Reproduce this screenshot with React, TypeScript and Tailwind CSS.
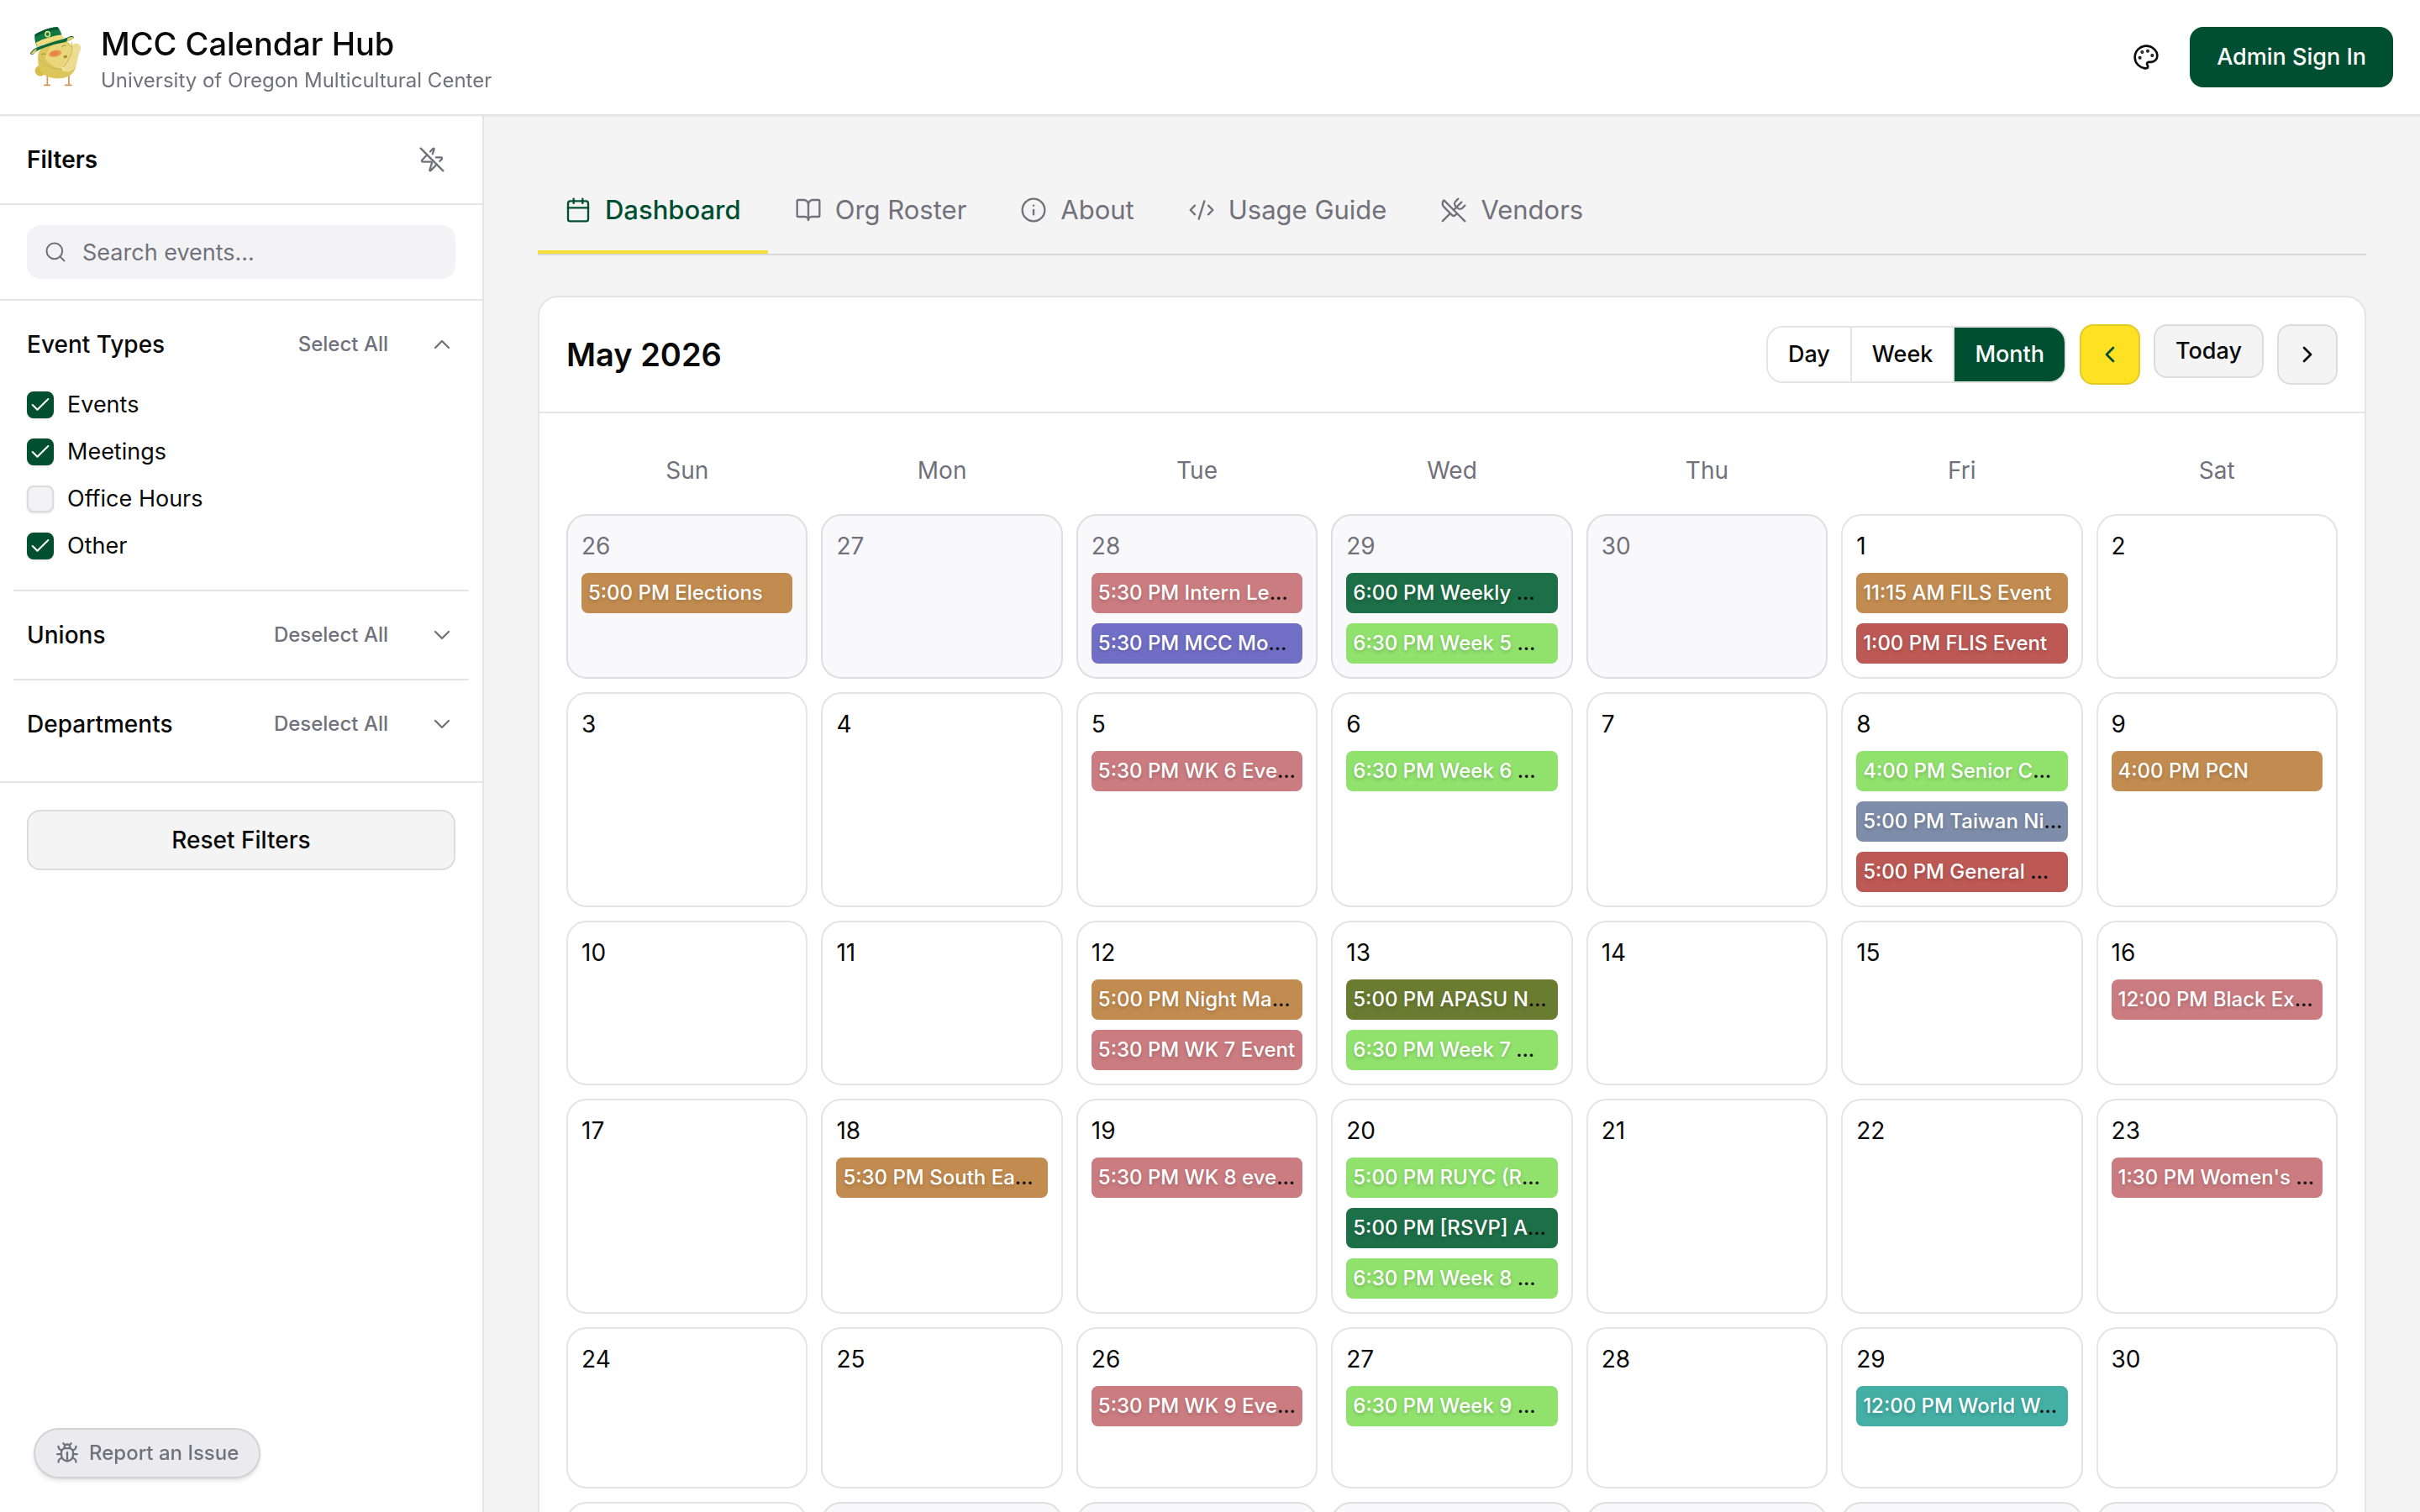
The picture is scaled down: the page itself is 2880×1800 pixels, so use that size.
import { useState } from "react";
import {
  Bug,
  Calendar,
  Check,
  ChevronDown,
  ChevronLeft,
  ChevronRight,
  ChevronUp,
  CodeXml,
  Info,
  Search,
  UtensilsCrossed,
  ZapOff,
} from "lucide-react";

interface CalendarEvent {
  time: string;
  title: string;
  color: string;
  cut?: boolean;
}

interface CalendarDay {
  day: number;
  outside?: boolean;
  events?: CalendarEvent[];
}

const BROWN = "bg-[#c28c50]";
const ROSE = "bg-[#cb7c80]";
const INDIGO = "bg-[#716fc5]";
const FOREST = "bg-[#1d6f48]";
const LIME = "bg-[#90e26d]";
const RED = "bg-[#bd5955]";
const SLATE = "bg-[#7e8da9]";
const OLIVE = "bg-[#6a7c30]";
const TEAL = "bg-[#44afa5]";

const weekdays = ["Sun", "Mon", "Tue", "Wed", "Thu", "Fri", "Sat"];

const days: CalendarDay[] = [
  { day: 26, outside: true, events: [{ time: "5:00 PM", title: "Elections", color: BROWN }] },
  { day: 27, outside: true },
  {
    day: 28,
    outside: true,
    events: [
      { time: "5:30 PM", title: "Intern Le", color: ROSE, cut: true },
      { time: "5:30 PM", title: "MCC Mo", color: INDIGO, cut: true },
    ],
  },
  {
    day: 29,
    outside: true,
    events: [
      { time: "6:00 PM", title: "Weekly ", color: FOREST, cut: true },
      { time: "6:30 PM", title: "Week 5 ", color: LIME, cut: true },
    ],
  },
  { day: 30, outside: true },
  {
    day: 1,
    events: [
      { time: "11:15 AM", title: "FILS Event", color: BROWN },
      { time: "1:00 PM", title: "FLIS Event", color: RED },
    ],
  },
  { day: 2 },
  { day: 3 },
  { day: 4 },
  { day: 5, events: [{ time: "5:30 PM", title: "WK 6 Eve", color: ROSE, cut: true }] },
  { day: 6, events: [{ time: "6:30 PM", title: "Week 6 ", color: LIME, cut: true }] },
  { day: 7 },
  {
    day: 8,
    events: [
      { time: "4:00 PM", title: "Senior C", color: LIME, cut: true },
      { time: "5:00 PM", title: "Taiwan Ni", color: SLATE, cut: true },
      { time: "5:00 PM", title: "General ", color: RED, cut: true },
    ],
  },
  { day: 9, events: [{ time: "4:00 PM", title: "PCN", color: BROWN }] },
  { day: 10 },
  { day: 11 },
  {
    day: 12,
    events: [
      { time: "5:00 PM", title: "Night Ma", color: BROWN, cut: true },
      { time: "5:30 PM", title: "WK 7 Event", color: ROSE },
    ],
  },
  {
    day: 13,
    events: [
      { time: "5:00 PM", title: "APASU N", color: OLIVE, cut: true },
      { time: "6:30 PM", title: "Week 7 ", color: LIME, cut: true },
    ],
  },
  { day: 14 },
  { day: 15 },
  { day: 16, events: [{ time: "12:00 PM", title: "Black Ex", color: ROSE, cut: true }] },
  { day: 17 },
  { day: 18, events: [{ time: "5:30 PM", title: "South Ea", color: BROWN, cut: true }] },
  { day: 19, events: [{ time: "5:30 PM", title: "WK 8 eve", color: ROSE, cut: true }] },
  {
    day: 20,
    events: [
      { time: "5:00 PM", title: "RUYC (R", color: LIME, cut: true },
      { time: "5:00 PM", title: "[RSVP] A", color: FOREST, cut: true },
      { time: "6:30 PM", title: "Week 8 ", color: LIME, cut: true },
    ],
  },
  { day: 21 },
  { day: 22 },
  { day: 23, events: [{ time: "1:30 PM", title: "Women's ", color: ROSE, cut: true }] },
  { day: 24 },
  { day: 25 },
  { day: 26, events: [{ time: "5:30 PM", title: "WK 9 Eve", color: ROSE, cut: true }] },
  { day: 27, events: [{ time: "6:30 PM", title: "Week 9 ", color: LIME, cut: true }] },
  { day: 28 },
  { day: 29, events: [{ time: "12:00 PM", title: "World W", color: TEAL, cut: true }] },
  { day: 30 },
  { day: 31 },
  { day: 1, outside: true },
  { day: 2, outside: true },
  { day: 3, outside: true },
  { day: 4, outside: true },
  { day: 5, outside: true },
  { day: 6, outside: true },
];

function DuckLogo() {
  return (
    <svg viewBox="36 36 216 216" className="size-18 shrink-0" aria-hidden="true">
      <g stroke="#d9924f" strokeWidth="5" strokeLinecap="round" fill="none">
        <path d="M109 210v33M98 244h20M186 208v35M173 244h22" />
      </g>
      <circle cx="84" cy="193" r="19" fill="#d8bd4c" />
      <path
        d="M78 128C92 96 130 78 160 82c28 6 44 26 48 52 6 30 6 50-8 66-16 20-60 26-88 14-26-10-36-30-36-52 0-12-2-22 2-34z"
        fill="#dcc659"
      />
      <path d="M120 106c30-24 62-14 74 6 6 18-8 44-32 76-20-4-52-20-62-42z" fill="#ead77c" />
      <path
        d="M192 118c2-12 8-22 18-23 14-1 21 10 18 22-5 10-9 22-12 40-4 24-16 38-34 40-16 0-22-10-18-20 16-8 26-26 28-59z"
        fill="#efdc93"
      />
      <path d="M80 150c20 24 50 38 80 36M196 92c6 30-6 62-34 92" stroke="#c8b458" strokeWidth="3" fill="none" />
      <path d="M160 180c6 2 8 8 6 14" stroke="#f2e9b8" strokeWidth="4" fill="none" />
      <ellipse cx="137" cy="131" rx="23" ry="12" transform="rotate(-12 137 131)" fill="#e99a4e" />
      <ellipse cx="135" cy="131" rx="14" ry="8" transform="rotate(-12 135 131)" fill="#e8854a" />
      <path d="M165 142l12-6 4 7-10 6z" fill="#a68a22" />
      <path d="M87 136c5-5 11-5 16-2M160 108c5-6 11-7 16-4" stroke="#8d9440" strokeWidth="3" fill="none" />
      <path d="M48 130c8-14 24-22 44-28 36-12 72-20 98-32 8-2 14 0 14 4-10 12-40 18-68 24-34 10-62 18-78 36-6 2-10 0-10-4z" fill="#0b6b3a" />
      <path d="M50 132c6-10 12-14 22-18l-4 12c-6 6-12 10-18 6zM182 76c8-4 16-6 22-2-4 8-14 12-26 13z" fill="#d9c76a" />
      <path d="M64 64c22-14 58-28 82-27 8 8 14 24 18 42-30 6-62 16-92 28-6-12-10-28-8-43z" fill="#0f7a40" />
      <path d="M64 64c22-14 58-28 82-27l4 8c-26 2-58 14-82 28z" fill="#07592f" />
      <path d="M68 92c28-14 62-24 94-28l5 15c-32 6-64 16-94 28z" fill="#f0dd7d" />
      <ellipse cx="110" cy="62" rx="8" ry="9" fill="none" stroke="#d8e38a" strokeWidth="5" />
    </svg>
  );
}

function PaletteIcon() {
  return (
    <svg
      viewBox="0 0 24 24"
      className="size-8"
      fill="none"
      stroke="currentColor"
      strokeWidth="2"
      strokeLinecap="round"
      strokeLinejoin="round"
      aria-hidden="true"
    >
      <circle cx="13.5" cy="6.5" r=".5" fill="currentColor" />
      <circle cx="17.5" cy="10.5" r=".5" fill="currentColor" />
      <circle cx="8.5" cy="7.5" r=".5" fill="currentColor" />
      <circle cx="6.5" cy="12.5" r=".5" fill="currentColor" />
      <path d="M12 2C6.5 2 2 6.5 2 12s4.5 10 10 10c.926 0 1.648-.746 1.648-1.688 0-.437-.18-.835-.437-1.125-.29-.289-.438-.652-.438-1.125a1.64 1.64 0 0 1 1.668-1.668h1.996c3.051 0 5.555-2.503 5.555-5.554C21.965 6.012 17.461 2 12 2z" />
    </svg>
  );
}

function BookIcon() {
  return (
    <svg
      viewBox="0 0 24 24"
      className="size-8"
      fill="none"
      stroke="currentColor"
      strokeWidth="1.75"
      strokeLinecap="round"
      strokeLinejoin="round"
      aria-hidden="true"
    >
      <path d="M12 7v14" />
      <path d="M3 18a1 1 0 0 1-1-1V4a1 1 0 0 1 1-1h5a4 4 0 0 1 4 4 4 4 0 0 1 4-4h5a1 1 0 0 1 1 1v13a1 1 0 0 1-1 1h-6a3 3 0 0 0-3 3 3 3 0 0 0-3-3z" />
    </svg>
  );
}

const tabs = [
  { name: "Dashboard", icon: <Calendar className="size-8" strokeWidth={1.75} /> },
  { name: "Org Roster", icon: <BookIcon /> },
  { name: "About", icon: <Info className="size-8" strokeWidth={1.75} /> },
  { name: "Usage Guide", icon: <CodeXml className="size-8" strokeWidth={1.75} /> },
  { name: "Vendors", icon: <UtensilsCrossed className="size-8" strokeWidth={1.75} /> },
];

function Header() {
  return (
    <header className="relative z-10 flex items-center justify-between border-b-2 border-[#e4e4e5] bg-white px-8 py-8 shadow-xs">
      <div className="flex h-18 items-center gap-4">
        <DuckLogo />
        <div>
          <h1 className="text-[38px] leading-[56px] font-medium">MCC Calendar Hub</h1>
          <p className="text-2xl leading-8 text-[#71717b]">University of Oregon Multicultural Center</p>
        </div>
      </div>
      <div className="flex items-center gap-4">
        <button type="button" aria-label="Theme" className="flex size-18 items-center justify-center">
          <PaletteIcon />
        </button>
        <button type="button" className="h-18 rounded-2xl bg-[#004f32] px-8 text-[27px] font-medium text-white">
          Admin Sign In
        </button>
      </div>
    </header>
  );
}

interface checkProps {
  label: string;
  checked: boolean;
  onChange: (value: boolean) => void;
}

function CheckRow(props: checkProps) {
  return (
    <label className="flex h-10 items-center gap-4 text-[27px]">
      <span className="relative flex size-8">
        <input
          type="checkbox"
          checked={props.checked}
          onChange={(e) => props.onChange(e.target.checked)}
          className="size-8 appearance-none rounded-lg border-2 border-[#dcdce0] bg-[#f3f3f5] shadow-sm checked:border-[#004f32] checked:bg-[#004f32]"
        />
        {props.checked && (
          <Check
            className="pointer-events-none absolute inset-0 m-auto size-7 text-white"
            strokeWidth={1.75}
          />
        )}
      </span>
      {props.label}
    </label>
  );
}

interface sectionProps {
  title: string;
  action: string;
  open?: boolean;
}

function SectionHead(props: sectionProps) {
  return (
    <div className="flex h-10 items-center px-4">
      <h3 className="flex-1 text-[28px] font-medium">{props.title}</h3>
      <button type="button" className="text-2xl font-medium text-[#71717b]">
        {props.action}
      </button>
      <button type="button" aria-label={"Toggle " + props.title} className="ml-12 text-[#71717b]">
        {props.open ? (
          <ChevronUp className="size-8" strokeWidth={1.75} />
        ) : (
          <ChevronDown className="size-8" strokeWidth={1.75} />
        )}
      </button>
    </div>
  );
}

function Sidebar() {
  const [search, setSearch] = useState("");
  const [types, setTypes] = useState<Record<string, boolean>>({
    Events: true,
    Meetings: true,
    "Office Hours": false,
    Other: true,
  });

  return (
    <aside className="w-144 shrink-0 border-r-2 border-[#e4e4e5] bg-white">
      <div className="flex h-[106px] items-center justify-between border-b-2 border-[#e4e4e5] pr-11 pl-8">
        <h2 className="text-[28px] font-semibold">Filters</h2>
        <button type="button" aria-label="Disable animations" className="text-[#71717b]">
          <ZapOff className="size-8" strokeWidth={1.75} />
        </button>
      </div>
      <div className="border-b-2 border-[#e4e4e5] px-8 py-6">
        <div className="relative">
          <Search
            className="absolute top-0 bottom-0 left-5 my-auto size-7 text-[#71717b]"
            strokeWidth={1.75}
          />
          <input
            type="text"
            value={search}
            onChange={(e) => setSearch(e.target.value)}
            placeholder="Search events..."
            aria-label="Search events"
            className="block h-16 w-full rounded-2xl bg-[#f3f3f5] pr-6 pl-[66px] text-[27px] placeholder:text-[#71717b]"
          />
        </div>
      </div>
      <div className="border-b-2 border-[#e4e4e5] px-4 pt-8 pb-12">
        <div className="border-b-2 border-[#e4e4e5] pb-8">
          <SectionHead title="Event Types" action="Select All" open />
          <div className="flex flex-col gap-4 px-4 pt-8">
            {Object.keys(types).map((name) => (
              <CheckRow
                key={name}
                label={name}
                checked={types[name]}
                onChange={(value) => setTypes({ ...types, [name]: value })}
              />
            ))}
          </div>
        </div>
        <div className="border-b-2 border-[#e4e4e5] py-8">
          <SectionHead title="Unions" action="Deselect All" />
        </div>
        <div className="pt-8">
          <SectionHead title="Departments" action="Deselect All" />
        </div>
      </div>
      <div className="p-8">
        <button
          type="button"
          className="h-18 w-full rounded-2xl border-2 border-[#dcdcde] bg-[#f4f4f4] text-[28px] font-medium"
        >
          Reset Filters
        </button>
      </div>
    </aside>
  );
}

function DayCell(props: CalendarDay) {
  return (
    <div
      className={
        "min-h-48 min-w-0 rounded-3xl border-2 p-4 " +
        (props.outside ? "border-[#dedee1] bg-[#f9f9fb] text-[#71717b]" : "border-[#e4e4e5] bg-white")
      }
    >
      <div className="text-[28px] leading-10">{props.day}</div>
      {props.events && (
        <div className="mt-3 flex flex-col gap-3">
          {props.events.map((event) => (
            <button
              key={event.time + event.title}
              type="button"
              className={
                "block h-12 w-full overflow-hidden rounded-lg px-2 text-left text-2xl font-medium whitespace-pre text-[#0a0a0a] " +
                event.color
              }
            >
              <span className="text-white [text-shadow:0_2px_4px_rgba(0,0,0,0.2)]">
                {event.time} {event.title}
              </span>
              {event.cut && "…"}
            </button>
          ))}
        </div>
      )}
    </div>
  );
}

function CalendarCard() {
  const [view, setView] = useState("Month");

  return (
    <section className="rounded-3xl border-2 border-[#e4e4e5] bg-white">
      <div className="flex items-start justify-between border-b-2 border-[#e4e4e5] p-8">
        <h2 className="text-[38px] leading-[72px] font-semibold">May 2026</h2>
        <div className="flex items-start gap-4">
          <div className="my-[2px] flex h-17 overflow-hidden rounded-[20px] border-2 border-[#e4e4e5]">
            {["Day", "Week", "Month"].map((name) => (
              <button
                key={name}
                type="button"
                onClick={() => setView(name)}
                className={
                  "border-l-2 border-[#e4e4e5] px-6 text-[27px] font-medium first:border-l-0 " +
                  (view === name ? "bg-[#004f32] text-white" : "bg-white")
                }
              >
                {name}
              </button>
            ))}
          </div>
          <button
            type="button"
            aria-label="Previous month"
            className="flex size-18 items-center justify-center rounded-2xl border-2 border-[#e3ca26] bg-[#fee123] text-[#004f32]"
          >
            <ChevronLeft className="size-8" />
          </button>
          <button
            type="button"
            className="h-16 rounded-2xl border-2 border-[#dcdcde] bg-[#f4f4f4] px-6 text-[27px] font-medium"
          >
            Today
          </button>
          <button
            type="button"
            aria-label="Next month"
            className="flex size-18 items-center justify-center rounded-2xl border-2 border-[#dcdcde] bg-[#f4f4f4]"
          >
            <ChevronRight className="size-8" />
          </button>
        </div>
      </div>
      <div className="grid grid-cols-7 gap-4 p-8">
        {weekdays.map((name) => (
          <div key={name} className="py-4 text-center text-[28px] leading-10 text-[#71717b]">
            {name}
          </div>
        ))}
        {days.map((item, index) => (
          <DayCell key={index} {...item} />
        ))}
      </div>
    </section>
  );
}

function App() {
  const [tab, setTab] = useState("Dashboard");

  return (
    <div className="flex h-screen flex-col overflow-hidden bg-white font-['Inter',sans-serif] text-[#0a0a0a]">
      <Header />
      <div className="flex min-h-0 flex-1">
        <Sidebar />
        <main className="min-w-0 flex-1 overflow-y-auto bg-[#f4f4f4] p-16 [scrollbar-width:none]">
          <nav className="mb-12 flex border-b-2 border-[#dadadc]">
            {tabs.map((item) => (
              <button
                key={item.name}
                type="button"
                onClick={() => setTab(item.name)}
                className={
                  "flex items-center gap-4 border-b-4 px-8 py-6 text-[31px] leading-[48px] " +
                  (tab === item.name
                    ? "border-[#f5e03a] font-medium text-[#004f32]"
                    : "border-transparent text-[#71717b]")
                }
              >
                {item.icon}
                {item.name}
              </button>
            ))}
          </nav>
          <CalendarCard />
        </main>
      </div>
      <button
        type="button"
        className="fixed bottom-10 left-10 z-20 flex h-15 items-center gap-3 rounded-full border-2 border-[#d3d3d6] bg-[#ebebef] px-6 text-2xl font-medium text-[#71717b] shadow-md"
      >
        <Bug className="size-7" />
        Report an Issue
      </button>
    </div>
  );
}

export default App;
